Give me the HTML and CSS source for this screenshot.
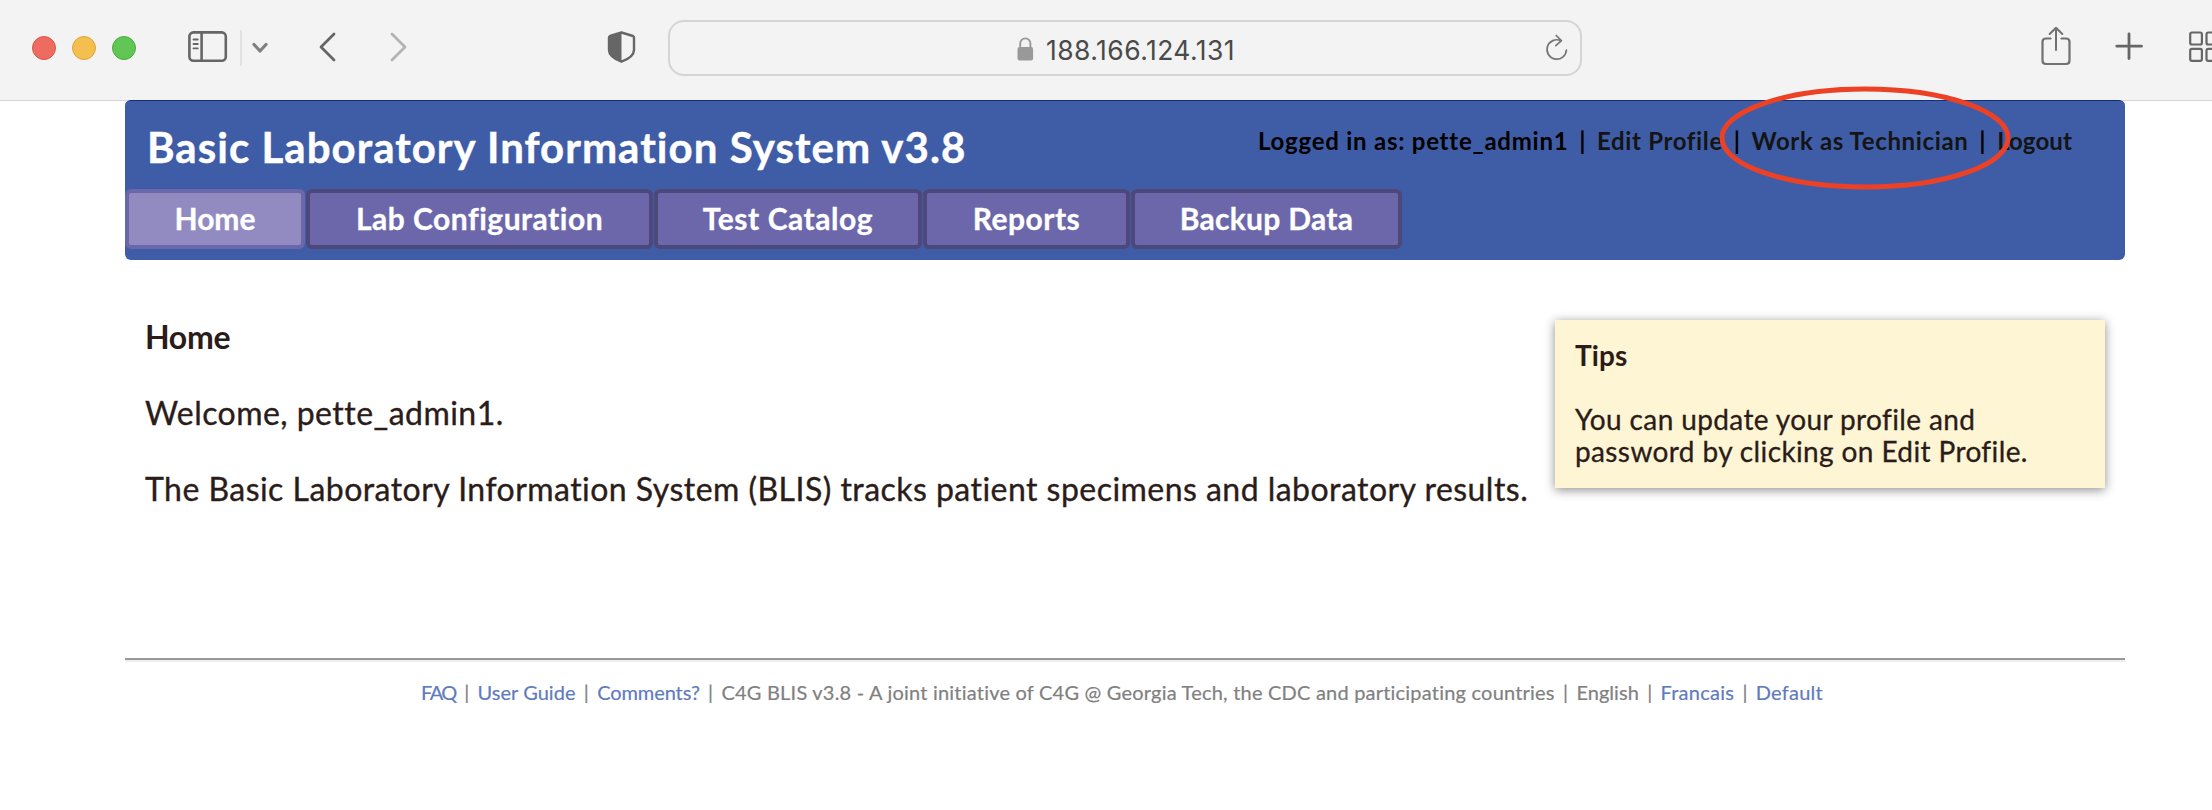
FILE: index.html
```
<!DOCTYPE html>
<html lang="en">
<head>
<meta charset="utf-8">
<title>Basic Laboratory Information System v3.8</title>
<link rel="stylesheet" href="styles.css">
</head>
<body>
<div class="browser-bar">
  <div class="lights"><i class="light red"></i><i class="light yellow"></i><i class="light green"></i></div>
  <svg class="ic-sidebar" width="40" height="34" viewBox="0 0 40 34" fill="none" stroke="#666" stroke-width="2.6"><rect x="1.4" y="2.4" width="36.4" height="28.4" rx="4"/><path d="M13.6 2.4v28.4"/><path d="M5.5 9.5h4.3M5.5 14h4.3M5.5 18.4h4.3" stroke-width="1.8" stroke-linecap="round"/></svg>
  <div class="bar-divider"></div>
  <svg class="ic-caret" width="16" height="12" viewBox="0 0 16 12" fill="none" stroke="#808084" stroke-width="3.2" stroke-linecap="round" stroke-linejoin="round"><path d="M2 2.5l6 6.5 6-6.5"/></svg>
  <svg class="ic-back" width="20" height="30" viewBox="0 0 20 30" fill="none" stroke="#666" stroke-width="2.8" stroke-linecap="round" stroke-linejoin="round"><path d="M16 2L3 15l13 13"/></svg>
  <svg class="ic-forward" width="20" height="30" viewBox="0 0 20 30" fill="none" stroke="#b3b3b3" stroke-width="2.8" stroke-linecap="round" stroke-linejoin="round"><path d="M3 2l13 13L3 28"/></svg>
  <svg class="ic-shield" width="30" height="34" viewBox="0 0 30 34"><path d="M14.5 2.5L26 6Q27 6.400 27 7.500V20Q27 27 14.500 31.700Q2 27 2 20V7.500Q2 6.400 3 6Z" fill="none" stroke="#666" stroke-width="2.400" stroke-linejoin="round"/><path d="M14.500 2V32Q2 27 1.500 21V6.500Z" fill="#666"/></svg>
  <div class="address">
    <svg class="ic-lock" width="17" height="24" viewBox="0 0 17 24"><path d="M3.200 11V6.500a5.100 5.100 0 0 1 10.200 0V11" fill="none" stroke="#999" stroke-width="1.900"/><rect x=".5" y="10" width="15.600" height="13.500" rx="2" fill="#999"/></svg>
    <span class="url">188.166.124.131</span>
    <svg class="ic-reload" width="24" height="28" viewBox="0 0 24 28" fill="none" stroke="#757575" stroke-width="1.700" stroke-linecap="round" stroke-linejoin="round"><path d="M21.400 16A9.700 9.700 0 1 1 15.800 6.700"/><path d="M11.200 1.500l5.200 5.200-5.600 5"/></svg>
  </div>
  <svg class="ic-share" width="30" height="40" viewBox="0 0 30 40" fill="none" stroke="#717171" stroke-width="2.200" stroke-linecap="round" stroke-linejoin="round"><path d="M9.500 15H5Q1.500 15 1.500 18.500V37Q1.500 40.500 5 40.500H25Q28.500 40.500 28.500 37V18.500Q28.500 15 25 15H20.500" transform="translate(0 -2.500)"/><path d="M15 24V2M8.700 8L15 1.800 21.300 8" stroke-width="2"/></svg>
  <svg class="ic-plus" width="28" height="28" viewBox="0 0 28 28" fill="none" stroke="#666" stroke-width="2.800" stroke-linecap="round"><path d="M14 1.800v24.700M1.800 14.200h24.700"/></svg>
  <svg class="ic-grid" width="23" height="32" viewBox="0 0 23 32" fill="none" stroke="#666" stroke-width="2.200"><rect x="1.200" y="2.500" width="11.700" height="12" rx="1.800"/><rect x="17.500" y="2.500" width="11.700" height="12" rx="1.800"/><rect x="1.200" y="18.800" width="11.700" height="12" rx="1.800"/><rect x="17.500" y="18.800" width="11.700" height="12" rx="1.800"/></svg>
</div>

<div class="page">
  <header class="header">
    <div class="header-top">
      <div class="brand">Basic Laboratory Information System v3.8</div>
      <div class="user-links">
        <span class="user">Logged in as: pette_admin1</span><span>|</span>
        <a class="edit">Edit Profile</a><span>|</span>
        <a class="edit">Work as Technician</a><span>|</span>
        <a class="logout">Logout</a>
      </div>
    </div>
    <nav class="tabs">
      <a class="tab tab-home active">Home</a>
      <a class="tab tab-lab">Lab Configuration</a>
      <a class="tab tab-test">Test Catalog</a>
      <a class="tab tab-reports">Reports</a>
      <a class="tab tab-backup">Backup Data</a>
    </nav>
  </header>
  <main class="main">
    <section class="intro">
      <h1>Home</h1>
      <p>Welcome, pette_admin1.</p>
      <p>The Basic Laboratory Information System (BLIS) tracks patient specimens and laboratory results.</p>
    </section>
    <aside class="tips">
      <h2>Tips</h2>
      <p>You can update your profile and<br>password by clicking on Edit Profile.</p>
    </aside>
  </main>
  <hr class="rule">
  <footer class="footer">
    <a class="faq">FAQ</a><span>|</span><a>User Guide</a><span>|</span><a class="comments">Comments?</a><span>|</span>
    <span class="credit">C4G BLIS v3.8 - A joint initiative of C4G @ Georgia Tech, the CDC and participating countries</span><span>|</span>
    <span>English</span><span>|</span><a class="lang">Francais</a><span>|</span><a class="lang">Default</a>
  </footer>
</div>
<svg class="highlight" width="296" height="108" viewBox="0 0 296 108"><ellipse cx="148" cy="54" rx="143" ry="49" fill="none" stroke="#ec4125" stroke-width="5"/></svg>
</body>
</html>
```
FILE: styles.css
```
* { box-sizing: border-box; }
body {
  margin: 0;
  position: relative;
  width: 2212px;
  height: 810px;
  overflow: hidden;
  background: #fff;
  color: #2b1c19;
  font-family: Lato, "Open Sans", sans-serif;
}
h1, h2, p { margin: 0; }
svg { display: block; flex: none; }

/* Browser toolbar */
.browser-bar {
  display: flex;
  align-items: flex-start;
  height: 101px;
  background: #f3f3f3;
  border-bottom: 1px solid #d5d5d5;
}
.lights { display: flex; gap: 16px; margin: 36px 0 0 32px; }
.light { width: 24px; height: 24px; border-radius: 50%; border: 1px solid; }
.red { background: #ee6b60; border-color: #d9564c; }
.yellow { background: #f5bf50; border-color: #dba53b; }
.green { background: #62c655; border-color: #4dac41; }
.ic-sidebar { margin: 30px 0 0 52px; }
.bar-divider { width: 2px; height: 36px; margin: 30px 0 0 12px; background: #e2e2e2; }
.ic-caret { margin: 42px 0 0 10px; }
.ic-back { margin: 32px 0 0 50px; }
.ic-forward { margin: 32px 0 0 51px; }
.ic-shield { margin: 30px 0 0 198px; }
.address {
  display: flex;
  align-items: flex-start;
  width: 914px;
  height: 56px;
  margin: 20px 0 0 31px;
  border: 2px solid #d4d4d4;
  border-radius: 16px;
}
.ic-lock { margin: 15px 0 0 347px; }
.url {
  margin: 12px 0 0 12px;
  width: 195px;
  font: 400 26.500px/32px Inter, "Liberation Sans", sans-serif;
  letter-spacing: .440px;
  color: #4a4a4a;
}
.ic-reload { margin: 12px 0 0 304px; }
.ic-share { margin: 26px 0 0 459px; }
.ic-plus { margin: 32px 0 0 44px; }
.ic-grid { margin: 30px 0 0 46px; }

/* Page header */
.page { width: 2000px; margin: -1px 0 0 125px; }
.header {
  position: relative;
  height: 160px;
  border-top: 1px solid #142f7a;
  border-radius: 6px;
  background: #3f5da7;
}
.header-top { display: flex; justify-content: space-between; height: 88px; padding: 0 53px 0 22px; }
.brand {
  margin-top: 20px;
  font-size: 42px;
  line-height: 52px;
  font-weight: 700;
  letter-spacing: 1.040px;
  color: #fff;
  -webkit-text-stroke: .400px;
}
.user-links {
  display: flex;
  justify-content: space-between;
  width: 814px;
  margin-top: 24px;
  font-size: 24px;
  line-height: 32px;
  font-weight: 700;
  letter-spacing: .640px;
  color: #000;
}
.user { letter-spacing: .760px; }
.edit, .logout { color: #141414; }
.logout { letter-spacing: .100px; }
.tabs { display: flex; gap: 1px; height: 60px; }
.tab {
  height: 60px;
  border: 4px solid #4e4779;
  border-radius: 6px;
  background: #6c67ab;
  color: #fff;
  font-size: 30px;
  line-height: 51px;
  font-weight: 700;
  text-align: center;
  -webkit-text-stroke: .300px;
}
.tab-home { width: 180px; }
.tab-lab { width: 347px; letter-spacing: .500px; }
.tab-test { width: 268px; letter-spacing: .550px; }
.tab-reports { width: 207px; letter-spacing: .500px; }
.tab-backup { width: 271px; letter-spacing: .300px; }
.active { border-color: #6c67ab; background: #918bc2; }

/* Content */
.main { display: flex; justify-content: space-between; height: 398px; padding: 60px 20px 0; }
.intro {
  font-size: 32px;
  line-height: 38px;
  letter-spacing: .460px;
  white-space: nowrap;
  -webkit-text-stroke: .350px;
}
.intro h1 { font-size: 32px; font-weight: 700; letter-spacing: -.300px; -webkit-text-stroke: 0; margin-top: -2px; }
.intro p { margin-top: 38px; }
.tips {
  width: 550px;
  height: 168px;
  padding: 19px 20px;
  background: #fdf5d4;
  box-shadow: 0 2px 10px rgba(0, 0, 0, .450);
  font-size: 28px;
  line-height: 32px;
  letter-spacing: .380px;
  -webkit-text-stroke: .300px;
}
.tips h2 { font-size: 28px; line-height: 32px; letter-spacing: .100px; margin-bottom: 32px; -webkit-text-stroke: 0; }
.rule { width: 2000px; height: 4px; margin: 0; border: 0; border-top: 2px solid #999; background: #eee; }
.footer {
  display: flex;
  justify-content: space-between;
  width: 1402px;
  margin: 18px 0 0 296px;
  font-size: 20px;
  line-height: 24px;
  letter-spacing: .050px;
  white-space: nowrap;
  color: #808080;
  -webkit-text-stroke: .200px;
}
.footer a { color: #5f7bbd; }
.faq { letter-spacing: -1.500px; }
.comments { letter-spacing: -.100px; }
.lang { letter-spacing: .250px; }
.credit { letter-spacing: .210px; }

/* Hand-drawn callout over the account links */
.highlight { position: absolute; left: 1717px; top: 83.500px; }
```
